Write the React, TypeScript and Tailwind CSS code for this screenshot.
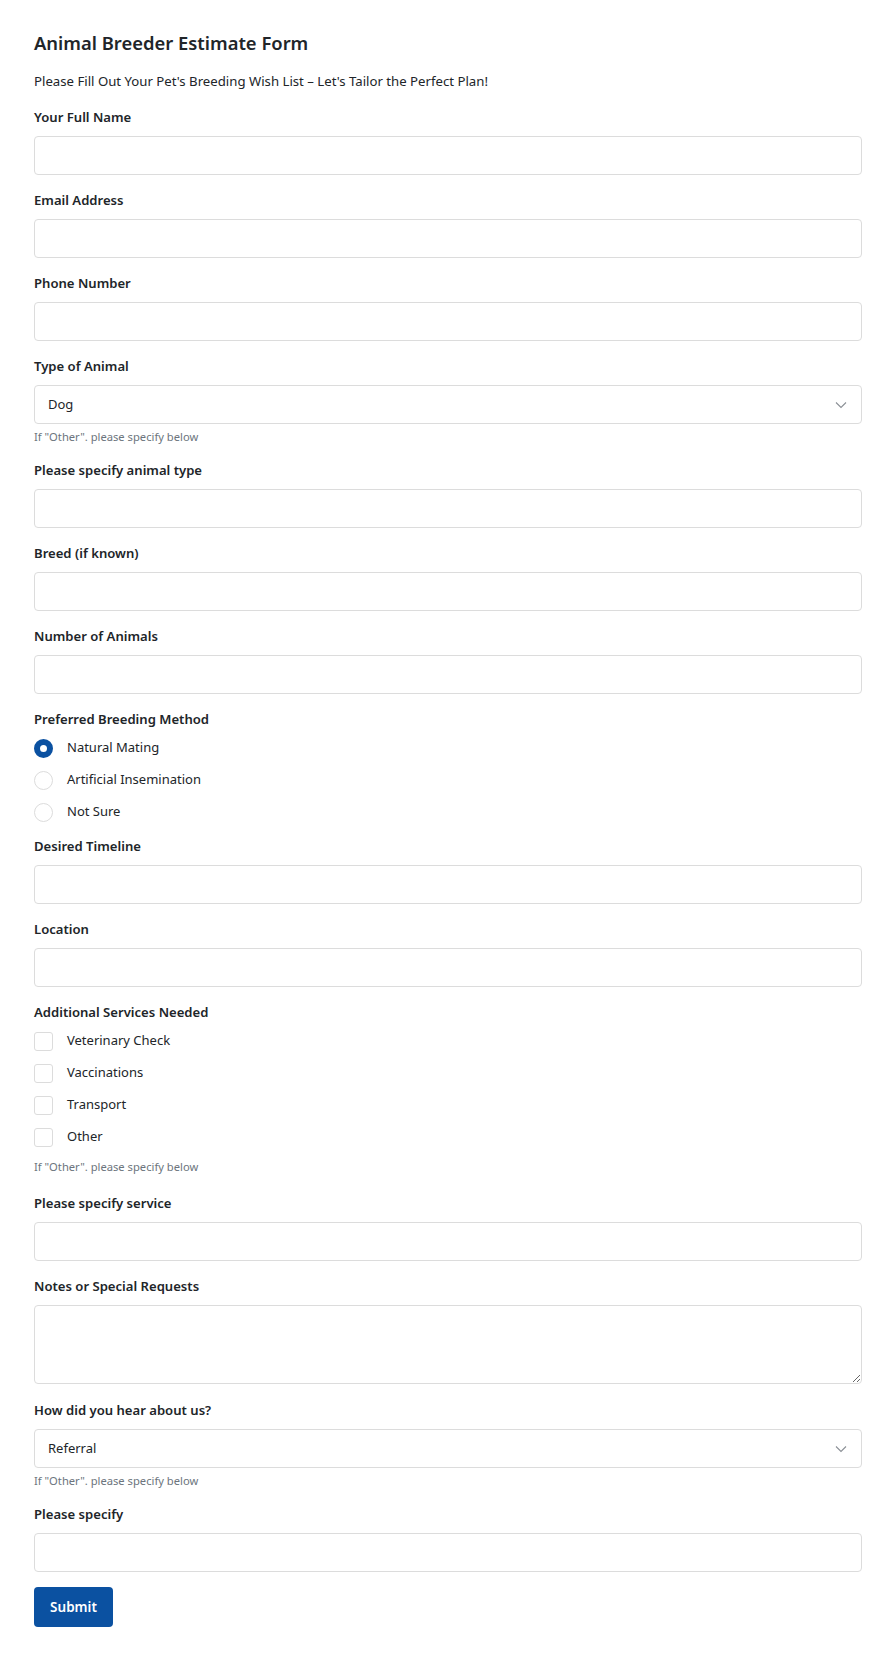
import React from "react";

const hint = "If \"Other\". please specify below";

function Label({ children }: { children: React.ReactNode }) {
  return (
    <label className="block text-[13.1px] leading-[21px] font-semibold text-[#212529] mb-[8px]">
      {children}
    </label>
  );
}

function TextField({ label }: { label: string }) {
  return (
    <div className="mb-[15px]">
      <Label>{label}</Label>
      <input
        type="text"
        className="block w-full h-[39px] rounded-[4px] border border-[#dcdcdc] bg-white px-3 text-[14px] outline-none"
      />
    </div>
  );
}

function SelectField({ label, value }: { label: string; value: string }) {
  return (
    <div className="mb-[15px]">
      <Label>{label}</Label>
      <div className="relative">
        <div className="flex h-[39px] w-full items-center rounded-[4px] border border-[#dcdcdc] bg-white pl-[13px] text-[13px] text-[#212529]">
          {value}
        </div>
        <svg
          className="absolute right-[15px] top-1/2 -translate-y-1/2"
          width="12"
          height="8"
          viewBox="0 0 12 8"
          fill="none"
        >
          <path d="M1 1.5 6 6.5 11 1.5" stroke="#8a8f95" strokeWidth="1.1" />
        </svg>
      </div>
      <p className="mt-[5px] text-[11.2px] leading-[16px] text-[#6c757d]">{hint}</p>
    </div>
  );
}

function Radio({ label, checked }: { label: string; checked?: boolean }) {
  return (
    <div className="flex h-[32px] items-center gap-[14px]">
      {checked ? (
        <span className="box-border h-[19px] w-[19px] rounded-full border-[6px] border-[#0b51a1] bg-white" />
      ) : (
        <span className="box-border h-[19px] w-[19px] rounded-full border border-[#dcdcdc] bg-white" />
      )}
      <span className="text-[13px] text-[#212529]">{label}</span>
    </div>
  );
}

function Check({ label }: { label: string }) {
  return (
    <div className="flex h-[32px] items-center gap-[14px]">
      <span className="box-border h-[19px] w-[19px] rounded-[3px] border border-[#dcdcdc] bg-white" />
      <span className="text-[13px] text-[#212529]">{label}</span>
    </div>
  );
}

export default function App() {
  return (
    <div
      className="min-h-[1653px] bg-white pl-[34px] pr-[17px] pt-[28px] pb-[27px] text-[#212529]"
      style={{ fontFamily: '"Segoe UI", "Noto Sans", sans-serif' }}
    >
      <h1 className="text-[18.4px] leading-[30px] font-semibold text-[#212529]">
        Animal Breeder Estimate Form
      </h1>
      <p className="mt-[13px] mb-[16px] text-[13.2px] leading-[20px]">
        Please Fill Out Your Pet&apos;s Breeding Wish List – Let&apos;s Tailor the Perfect Plan!
      </p>

      <TextField label="Your Full Name" />
      <TextField label="Email Address" />
      <TextField label="Phone Number" />
      <SelectField label="Type of Animal" value="Dog" />
      <TextField label="Please specify animal type" />
      <TextField label="Breed (if known)" />
      <TextField label="Number of Animals" />

      <div className="mb-[8px]">
        <Label>Preferred Breeding Method</Label>
        <div className="-mt-[6px]">
          <Radio label="Natural Mating" checked />
          <Radio label="Artificial Insemination" />
          <Radio label="Not Sure" />
        </div>
      </div>

      <TextField label="Desired Timeline" />
      <TextField label="Location" />

      <div className="mb-[18px]">
        <Label>Additional Services Needed</Label>
        <div className="-mt-[6px]">
          <Check label="Veterinary Check" />
          <Check label="Vaccinations" />
          <Check label="Transport" />
          <Check label="Other" />
        </div>
        <p className="mt-[6px] text-[11.2px] leading-[16px] text-[#6c757d]">{hint}</p>
      </div>

      <TextField label="Please specify service" />

      <div className="mb-[16px]">
        <Label>Notes or Special Requests</Label>
        <textarea className="block h-[79px] w-full resize-y rounded-[4px] border border-[#dcdcdc] bg-white px-3 py-2 text-[14px] outline-none" />
      </div>

      <SelectField label="How did you hear about us?" value="Referral" />
      <TextField label="Please specify" />

      <button className="h-[40px] w-[79px] rounded-[4px] bg-[#0b51a1] text-[13.5px] font-semibold text-white">
        Submit
      </button>
    </div>
  );
}
